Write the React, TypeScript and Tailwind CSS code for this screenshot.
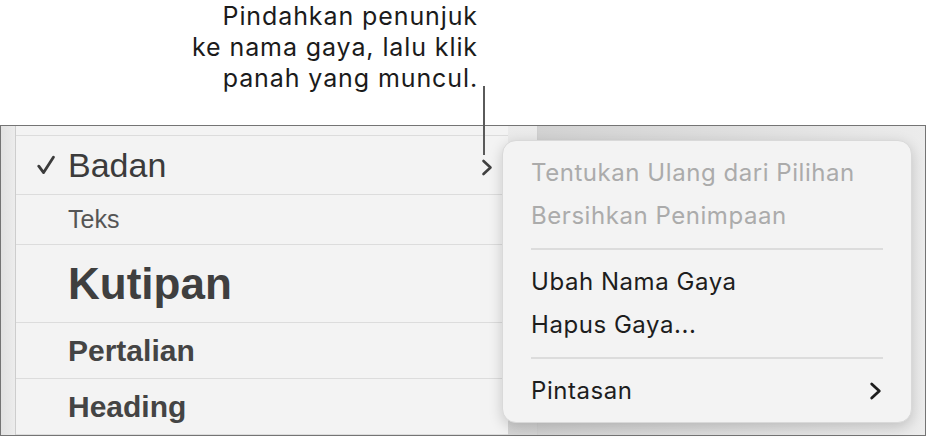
import React from 'react';

const styles = [
    { name: 'Badan', cls: "text-[34px] font-normal text-[#3b3b3b]", h: "h-[59px]", checked: true },
    { name: 'Teks', cls: "text-[25px] font-normal text-[#555555]", h: "h-[50px]" },
    { name: 'Kutipan', cls: "text-[44px] font-bold text-[#3f3f3f]", h: "h-[78px]" },
    { name: 'Pertalian', cls: "text-[30px] font-bold text-[#444444]", h: "h-[56px]" },
    { name: 'Heading', cls: "text-[30px] font-bold text-[#444444]", h: "h-[56px]" },
];

const Chevron = ({ className }: { className?: string }) => (
    <svg viewBox="0 0 12 18" className={className} fill="none" stroke="currentColor" strokeWidth="2.6" strokeLinecap="round" strokeLinejoin="round">
        <path d="M2.5 2.5 L9.5 9 L2.5 15.5" />
    </svg>
);

const App: React.FC = () => {
    return (
        <div className="w-[928px] h-[439px] bg-white overflow-hidden relative [font-family:Inter,'Liberation_Sans',sans-serif]">
            {/* Keterangan */}
            <div className="h-[125px] w-[478px] pt-[1px] text-right text-[25px] leading-[31px] text-[#1b1b1b] tracking-[0.9px]">
                <p>Pindahkan penunjuk</p>
                <p>ke nama gaya, lalu klik</p>
                <p>panah yang muncul.</p>
            </div>

            {/* Bingkai */}
            <div className="w-[926px] h-[311px] border border-[#747474] flex">
                <div className="w-[15px] h-full bg-gradient-to-r from-[#e2e2e2] to-[#ececec] border-r border-[#cdcdcd]" />
                <div className="w-[492px] h-full bg-[#f3f3f3] flex flex-col [font-family:'Liberation_Sans',Arial,sans-serif]">
                    <div className="h-[10px] border-b border-[#dcdcdc]" />
                    {styles.map((s) => (
                        <div key={s.name} className={`${s.h} border-b border-[#dcdcdc] flex items-center relative`}>
                            <div className="w-[52px] flex justify-end pr-[13px]">
                                {s.checked && (
                                    <svg viewBox="0 0 18 20" className="w-[18px] h-[20px] text-[#3b3b3b]" fill="none" stroke="currentColor" strokeWidth="2.8" strokeLinecap="round" strokeLinejoin="round">
                                        <path d="M1.8 11.2 L6.6 17.6 L16.4 2.2" />
                                    </svg>
                                )}
                            </div>
                            <span className={`${s.cls} leading-none`}>{s.name}</span>
                            {s.checked && (
                                <Chevron className="absolute left-[465px] top-[22px] w-[12px] h-[19px] text-[#404040]" />
                            )}
                        </div>
                    ))}
                </div>
                <div className="w-[30px] h-full bg-gradient-to-b from-[#ebebeb] to-[#d4d4d4] border-r border-[#cfcfcf]" />
                <div className="flex-1 h-full bg-gradient-to-r from-[#d2d2d2] to-[#ececec]" />
            </div>

            {/* Garis penunjuk */}
            <div className="absolute left-[483px] top-[86px] w-[2px] h-[69px] bg-[#5a5a5a]" />

            {/* Menu */}
            <div className="absolute left-[502px] top-[140px] w-[410px] h-[283px] bg-[#f3f3f3] rounded-[14px] border border-[#d9d9d9] shadow-[0_4px_14px_rgba(0,0,0,0.18)] px-[28px] py-[10px] flex flex-col text-[24px] tracking-[0.55px]">
                <div className="h-[43px] flex items-center text-[#ababab]">Tentukan Ulang dari Pilihan</div>
                <div className="h-[43px] flex items-center text-[#ababab]">Bersihkan Penimpaan</div>
                <div className="h-[23px] flex items-center"><div className="w-full h-[2px] bg-[#dcdcdc]" /></div>
                <div className="h-[43px] flex items-center text-[#1d1d1d]">Ubah Nama Gaya</div>
                <div className="h-[43px] flex items-center text-[#1d1d1d]">Hapus Gaya...</div>
                <div className="h-[23px] flex items-center"><div className="w-full h-[2px] bg-[#dcdcdc]" /></div>
                <div className="h-[43px] flex items-center justify-between text-[#1d1d1d]">
                    <span>Pintasan</span>
                    <Chevron className="w-[13px] h-[20px] text-[#1d1d1d] mr-[1px]" />
                </div>
            </div>
        </div>
    );
};

export default App;
